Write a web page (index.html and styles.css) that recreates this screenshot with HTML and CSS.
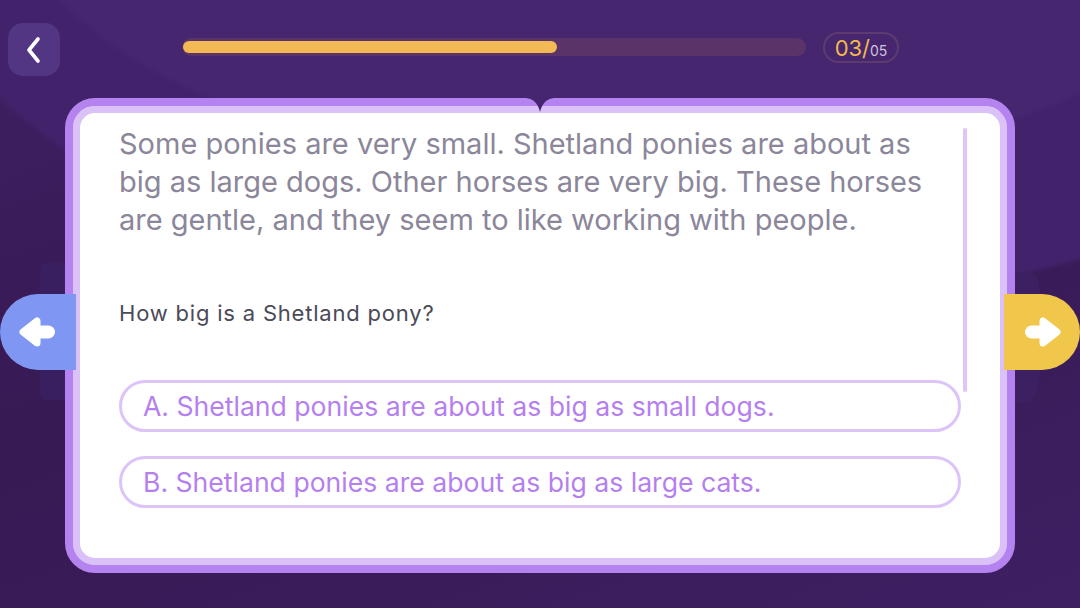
FILE: index.html
```html
<!DOCTYPE html>
<html lang="en">
<head>
    <meta charset="UTF-8">
    <meta name="viewport" content="width=device-width, initial-scale=1.0">
    <title>Reading Quiz</title>
    <link rel="stylesheet" href="styles.css">
</head>
<body>
    <div id="screen">
        <div class="topBar">
            <a href="#" class="backBtn">
                <svg width="20" height="30" viewBox="0 0 20 30">
                    <path d="M14 4 L5 15 L14 26" fill="none" stroke="#fff" stroke-width="3.6" stroke-linecap="round" stroke-linejoin="round"/>
                </svg>
            </a>
            <div class="progress">
                <div class="progressFill" style="width: 60%"></div>
            </div>
            <div class="counter"><span class="current">03/</span><span class="total">05</span></div>
        </div>

        <div class="stage">
            <div class="ghost ghostLeft"></div>
            <div class="ghost ghostRight"></div>

            <div id="card">
                <svg class="notch" width="28" height="16" viewBox="0 0 28 16">
                    <path d="M0 0 H28 Q17 1 14 14 Q11 1 0 0 Z" fill="#452470"/>
                </svg>
                <div class="scrollBar"></div>

                <p class="passage">Some ponies are very small. Shetland ponies are about as big as large dogs. Other horses are very big. These horses are gentle, and they seem to like working with people.</p>

                <p class="question">How big is a Shetland pony?</p>

                <div class="options">
                    <div class="option">A. Shetland ponies are about as big as small dogs.</div>
                    <div class="option">B. Shetland ponies are about as big as large cats.</div>
                </div>
            </div>

            <a href="#" class="sideBtn prevBtn">
                <svg width="40" height="30" viewBox="0 0 40 30">
                    <path d="M5 15 L19 4 L19 26 Z" fill="#fff" stroke="#fff" stroke-width="7" stroke-linejoin="round"/>
                    <rect x="17" y="8.5" width="20" height="13" rx="6.5" fill="#fff"/>
                </svg>
            </a>
            <a href="#" class="sideBtn nextBtn">
                <svg width="40" height="30" viewBox="0 0 40 30">
                    <path d="M35 15 L21 4 L21 26 Z" fill="#fff" stroke="#fff" stroke-width="7" stroke-linejoin="round"/>
                    <rect x="3" y="8.5" width="20" height="13" rx="6.5" fill="#fff"/>
                </svg>
            </a>
        </div>
    </div>
</body>
</html>
```

FILE: styles.css
```css
/* Reset default margin and padding */
* {
    margin: 0;
    padding: 0;
    box-sizing: border-box;
}

body {
    font-family: Inter, "Noto Sans", sans-serif;
    width: 1080px;
    height: 608px;
    overflow: hidden;
    background-color: #3d1e60;
}

/* Dark purple backdrop with soft curved bands */
#screen {
    width: 1080px;
    height: 608px;
    display: flex;
    flex-direction: column;
    background:
        radial-gradient(ellipse 900px 420px at 640px -120px, #46266f 0%, #46266f 70%, rgba(70, 38, 111, 0) 71%),
        radial-gradient(ellipse 1100px 520px at 700px -60px, #42226a 0%, #42226a 70%, rgba(66, 34, 106, 0) 71%),
        linear-gradient(160deg, #3f1f63 0%, #371953 45%, #3e1f62 100%);
}

/* Top bar: back button, progress, counter */
.topBar {
    height: 98px;
    display: flex;
    align-items: flex-start;
    padding: 23px 0 0 8px;
}

.backBtn {
    width: 52px;
    height: 53px;
    border-radius: 15px;
    background-color: #533683;
    display: flex;
    align-items: center;
    justify-content: center;
}

.progress {
    width: 624px;
    height: 18px;
    margin: 15px 0 0 122px;
    border-radius: 9px;
    background-color: #5a3468;
    padding: 3px 0 3px 1px;
}

.progressFill {
    height: 12px;
    border-radius: 6px;
    background-color: #f3b955;
}

.counter {
    margin: 9px 0 0 17px;
    width: 76px;
    height: 31px;
    border: 2px solid #5d3b6f;
    border-radius: 16px;
    display: flex;
    align-items: baseline;
    justify-content: center;
    padding-top: 1px;
}

.counter .current {
    color: #f2b94b;
    font-size: 22px;
    line-height: 26px;
}

.counter .total {
    color: #cfc3dc;
    font-size: 14px;
}

/* Card area */
.stage {
    position: relative;
    flex: 1;
    padding-left: 65px;
}

.ghost {
    position: absolute;
    background-color: #3a1f60;
    border-radius: 8px;
}

.ghostLeft {
    left: 40px;
    top: 165px;
    width: 40px;
    height: 137px;
}

.ghostRight {
    left: 1000px;
    top: 175px;
    width: 40px;
    height: 130px;
    background-color: #3c2062;
    border-radius: 40% 20% 30% 10%;
}

#card {
    position: relative;
    width: 950px;
    height: 475px;
    border: 8px solid #b583ef;
    border-radius: 30px;
    background-color: #fff;
    box-shadow: inset 0 0 0 7px #dac2f8;
    padding: 19px 46px 0 46px;
}

.notch {
    position: absolute;
    top: -8px;
    left: 453px;
}

.scrollBar {
    position: absolute;
    left: 890px;
    top: 22px;
    width: 4px;
    height: 264px;
    border-radius: 2px;
    background-color: #dcc6f8;
}

.passage {
    width: 810px;
    font-size: 29px;
    line-height: 38px;
    color: #8b8699;
}

.question {
    margin-top: 60px;
    font-size: 22px;
    line-height: 28px;
    letter-spacing: 0.8px;
    color: #4b4a57;
}

.options {
    margin-top: 53px;
    display: flex;
    flex-direction: column;
    gap: 24px;
}

.option {
    height: 52px;
    border: 3px solid #dcc4f8;
    border-radius: 26px;
    padding: 0 21px;
    display: flex;
    align-items: center;
    font-size: 26.6px;
    color: #b57ff0;
}

/* Side navigation buttons sit over the card edges */
.sideBtn {
    position: absolute;
    top: 196px;
    width: 76px;
    height: 76px;
    display: flex;
    align-items: center;
    justify-content: center;
}

.prevBtn {
    left: 0;
    background-color: #7f97f3;
    border-radius: 38px 0 0 38px;
}

.nextBtn {
    left: 1004px;
    background-color: #f0c64b;
    border-radius: 0 38px 38px 0;
}
```
